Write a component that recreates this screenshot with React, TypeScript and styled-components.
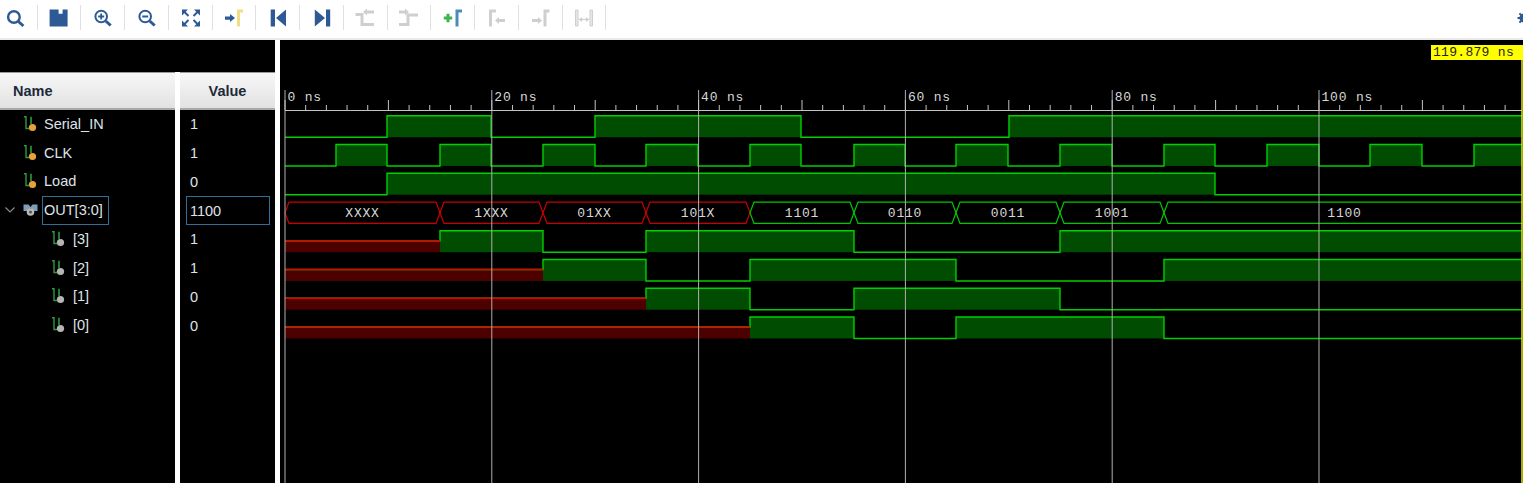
import React from "react";
import styled, { createGlobalStyle } from "styled-components";

const Global = createGlobalStyle`
  html, body { margin: 0; padding: 0; background: #000; overflow: hidden; }
`;

const Shell = styled.div`
  display: flex;
  flex-direction: column;
  width: 1523px;
  height: 483px;
  overflow: hidden;
  font-family: "Liberation Sans", Arial, sans-serif;
`;

const Toolbar = styled.div`
  flex: 0 0 40px;
  box-sizing: border-box;
  display: flex;
  align-items: flex-start;
  padding-top: 5px;
  background: #fff;
  border-bottom: 2.5px solid #e9e9e9;
`;

const ToolRow = styled.div`
  display: flex;
  margin-left: -6.25px;
`;

const ToolButton = styled.div`
  box-sizing: border-box;
  width: 43.75px;
  height: 25px;
  display: flex;
  align-items: center;
  justify-content: center;
  border-right: 1.5px solid #e0e0e0;
  svg { display: block; margin-top: 0.5px; margin-left: 1px; }
`;

const CornerGlyph = styled.div`
  margin-left: auto;
  width: 6px;
  height: 25px;
  overflow: hidden;
  display: flex;
  align-items: center;
  svg { flex: 0 0 auto; }
`;

const Main = styled.div`
  flex: 1;
  min-height: 0;
  display: flex;
  gap: 5px;
  background: #fff;
`;

const SidePanel = styled.div`
  flex: 0 0 275px;
  display: flex;
  flex-direction: column;
`;

const TopStrip = styled.div`
  flex: 0 0 32px;
  background: #000;
`;

const Columns = styled.div`
  flex: 1;
  display: flex;
  gap: 5px;
  min-height: 0;
`;

const Column = styled.div<{ $width: number }>`
  flex: 0 0 ${(p) => p.$width}px;
  background: #000;
  display: flex;
  flex-direction: column;
`;

const HeaderCell = styled.div<{ $centered?: boolean }>`
  box-sizing: border-box;
  flex: 0 0 38px;
  display: flex;
  align-items: center;
  justify-content: ${(p) => (p.$centered ? "center" : "flex-start")};
  padding-left: ${(p) => (p.$centered ? "0" : "13px")};
  background: linear-gradient(#f7f7f7, #e2e2e2);
  border-top: 1px solid #9a9a9a;
  border-bottom: 2px solid #a8a8a8;
  color: #1c2a3a;
  font-size: 14.5px;
  font-weight: 700;
`;

const NameRow = styled.div<{ $depth: number }>`
  box-sizing: border-box;
  height: 28.75px;
  display: flex;
  align-items: center;
  padding-left: ${(p) => (p.$depth ? 51 : 23)}px;
  position: relative;
  color: #dfe3e8;
  font-size: 14.5px;
`;

const Chevron = styled.svg`
  position: absolute;
  left: 4px;
  top: 10px;
`;

const SignalLabel = styled.span<{ $selected?: boolean; $depth: number }>`
  box-sizing: border-box;
  margin-left: ${(p) => (p.$depth ? 5 : 4)}px;
  height: 29px;
  line-height: 27px;
  padding: 0 ${(p) => (p.$selected ? 5 : 1)}px 0 1px;
  border: 1px solid ${(p) => (p.$selected ? "#2f7099" : "transparent")};
`;

const ValueRow = styled.div<{ $selected?: boolean }>`
  box-sizing: border-box;
  height: 28.75px;
  margin: 0 5px 0 6px;
  padding-left: 3px;
  display: flex;
  align-items: center;
  color: #dfe3e8;
  font-size: 14.5px;
  border: 1px solid ${(p) => (p.$selected ? "#2f7099" : "transparent")};
`;

const WavePanel = styled.div`
  flex: 1;
  min-width: 0;
  background: #000;
  position: relative;
  overflow: hidden;
`;

const WaveSvg = styled.svg`
  display: block;
  text {
    font-family: "Liberation Mono", "DejaVu Sans Mono", monospace;
    font-size: 13px;
    letter-spacing: 0.8px;
    fill: #d8d8d8;
  }
`;

const CursorTag = styled.div`
  position: absolute;
  right: 0;
  top: 5px;
  width: 92px;
  height: 15px;
  box-sizing: border-box;
  padding-left: 2px;
  background: #ffff00;
  color: #222;
  font-family: "Liberation Mono", "DejaVu Sans Mono", monospace;
  font-size: 13px;
  letter-spacing: 0.3px;
  line-height: 15px;
  white-space: nowrap;
  overflow: hidden;
`;

const BLUE = "#2d5a94";
const GREY = "#cfcfcf";

const I = ({ children }: { children: React.ReactNode }) => (
  <svg width="24" height="24" viewBox="0 0 24 24" fill="none">
    {children}
  </svg>
);

const tools: React.ReactNode[] = [
  <I>
    <circle cx="9.9" cy="11" r="5.8" stroke={BLUE} strokeWidth="2.4" />
    <path d="M14.4 15.5L19.4 20" stroke={BLUE} strokeWidth="3" />
  </I>,
  <I>
    <path d="M2.6 3.5H11.6V7.8H15.6V3.5H20.6V20.5H2.6Z" fill={BLUE} />
  </I>,
  <I>
    <circle cx="10.2" cy="10.5" r="5.8" stroke={BLUE} strokeWidth="2" />
    <path d="M7.2 10.5H13.2M10.2 7.5V13.5" stroke={BLUE} strokeWidth="1.8" />
    <path d="M14.7 15L19.7 19.5" stroke={BLUE} strokeWidth="3" />
  </I>,
  <I>
    <circle cx="10.2" cy="10.5" r="5.8" stroke={BLUE} strokeWidth="2" />
    <path d="M7.2 10.5H13.2" stroke={BLUE} strokeWidth="2" />
    <path d="M14.7 15L19.7 19.5" stroke={BLUE} strokeWidth="3" />
  </I>,
  <I>
    <path
      d="M3 3.5H9L3 9.5ZM21 3.5H15L21 9.5ZM3 20.5H9L3 14.5ZM21 20.5H15L21 14.5Z"
      fill={BLUE}
    />
    <path d="M5 5.5L9.5 10M19 5.5L14.5 10M5 18.5L9.5 14M19 18.5L14.5 14" stroke={BLUE} strokeWidth="2" />
  </I>,
  <I>
    <path d="M3 10.5H8V8L13 12L8 16V13.7H3Z" fill={BLUE} />
    <path d="M16.5 20.5V5H21" stroke="#f0dd85" strokeWidth="3" />
  </I>,
  <I>
    <path d="M4.7 3.5H9V20.5H4.7ZM20 3.5V20.5L10 12Z" fill={BLUE} />
  </I>,
  <I>
    <path d="M4.8 3.5L15 12L4.8 20.5ZM16 3.5H20.2V20.5H16Z" fill={BLUE} />
  </I>,
  <I>
    <path d="M1.5 8.5H8V18.5H20" stroke={GREY} strokeWidth="3" />
    <path d="M9 6L13 2.5V4.5H20V7.5H13V9.5Z" fill={GREY} />
  </I>,
  <I>
    <path d="M2 18.5H11V9H21" stroke={GREY} strokeWidth="3" />
    <path d="M2 4.5H8V2.5L12 6L8 9.5V7.5H2Z" fill={GREY} />
  </I>,
  <I>
    <path d="M2.8 12H11.2M7 7.8V16.2" stroke="#3fb350" strokeWidth="3" />
    <path d="M16 20.5V5H21" stroke="#4a8bb8" strokeWidth="3" />
  </I>,
  <I>
    <path d="M5.5 20.5V5H11" stroke={GREY} strokeWidth="3" />
    <path d="M10 14.5L14 11V13H20V16H14V18Z" fill={GREY} />
  </I>,
  <I>
    <path d="M3 13H9V11L13 14.5L9 18V16H3Z" fill={GREY} />
    <path d="M16 20.5V5H20.5" stroke={GREY} strokeWidth="3" />
  </I>,
  <I>
    <path d="M3.5 4V20H6V4ZM18 4V20H20.5V4Z" stroke={GREY} strokeWidth="1" fill="#e6e6e6" />
    <path d="M7 13.5H17" stroke={GREY} strokeWidth="1.3" />
    <path d="M7 13.5L10 11V16ZM17 13.5L14 11V16Z" fill={GREY} />
  </I>,
];

const SignalIcon = ({ dot }: { dot: string }) => (
  <svg width="15" height="17" viewBox="0 0 15 17" fill="none" style={{ flex: "0 0 auto" }}>
    <path d="M1 0.8H3V12.5H6" stroke="#2f9a3e" strokeWidth="1.4" />
    <path d="M8 0.8V8" stroke="#2f9a3e" strokeWidth="1.6" />
    <circle cx="9.5" cy="11.5" r="3.6" fill={dot} />
  </svg>
);

const BusIcon = () => (
  <svg width="15" height="17" viewBox="0 0 15 17" fill="none" style={{ flex: "0 0 auto" }}>
    <path d="M0.5 2.5H5.5L7.5 5L9.5 2.5H14.5V9H11L7.5 6L4 9H0.5Z" fill="#7f9db5" />
    <circle cx="7.5" cy="10" r="3.8" fill="#b9b9b9" />
    <circle cx="7.5" cy="10" r="1.5" fill="#555" />
  </svg>
);

type Signal = { name: string; value: string; depth: number; kind: "scalar" | "bus"; dot?: string };

const signals: Signal[] = [
  { name: "Serial_IN", value: "1", depth: 0, kind: "scalar", dot: "#e8a13c" },
  { name: "CLK", value: "1", depth: 0, kind: "scalar", dot: "#e8a13c" },
  { name: "Load", value: "0", depth: 0, kind: "scalar", dot: "#e8a13c" },
  { name: "OUT[3:0]", value: "1100", depth: 0, kind: "bus" },
  { name: "[3]", value: "1", depth: 1, kind: "scalar", dot: "#b5b5b5" },
  { name: "[2]", value: "1", depth: 1, kind: "scalar", dot: "#b5b5b5" },
  { name: "[1]", value: "0", depth: 1, kind: "scalar", dot: "#b5b5b5" },
  { name: "[0]", value: "0", depth: 1, kind: "scalar", dot: "#b5b5b5" },
];

const END = 1522;
const ROW0 = 115.8;
const PITCH = 28.75;
const HEIGHT = 21.4;
const LINE = "#00cf00";
const FILL = "#004c00";

type Seg = [number, "0" | "1" | "x"];

// each entry: x at which the level starts
const clk: Seg[] = (() => {
  const xs = [285, 336, 387, 440, 491, 543, 595, 646, 698, 750, 801, 854, 905, 956, 1008, 1060, 1112, 1164, 1215, 1267, 1319, 1370, 1422, 1474];
  return xs.map((x, i) => [x, i % 2 ? "1" : "0"] as Seg);
})();

const waves: (Seg[] | null)[] = [
  [[285, "0"], [387, "1"], [491, "0"], [595, "1"], [801, "0"], [1009, "1"]],
  clk,
  [[285, "0"], [387, "1"], [1215, "0"]],
  null,
  [[285, "x"], [440, "1"], [543, "0"], [646, "1"], [854, "0"], [1060, "1"]],
  [[285, "x"], [543, "1"], [646, "0"], [750, "1"], [956, "0"], [1164, "1"]],
  [[285, "x"], [646, "1"], [750, "0"], [854, "1"], [1060, "0"]],
  [[285, "x"], [750, "1"], [854, "0"], [956, "1"], [1164, "0"]],
];

const busSegs: [number, number, string, boolean][] = [
  [285, 440, "XXXX", true],
  [440, 543, "1XXX", true],
  [543, 646, "01XX", true],
  [646, 750, "101X", true],
  [750, 854, "1101", false],
  [854, 956, "0110", false],
  [956, 1060, "0011", false],
  [1060, 1164, "1001", false],
  [1164, 1560, "1100", false],
];

const rulerTicks = Array.from({ length: 60 }, (_, i) => i * 2)
  .map((ns) => ({ ns, x: 285 + ns * 10.34 }))
  .filter((t) => t.x < END);
const labelled = [0, 20, 40, 60, 80, 100].map((ns) => ({ ns, x: 285 + ns * 10.34 }));

const ScalarWave = ({ segs, row }: { segs: Seg[]; row: number }) => {
  const hi = ROW0 + PITCH * row;
  const lo = hi + HEIGHT;
  const xTop = hi + 10;
  const parts = segs.map(([x, v], i) => ({ x, v, to: i + 1 < segs.length ? segs[i + 1][0] : END }));
  const lvl = (v: string) => (v === "1" ? hi : v === "0" ? lo : xTop);
  const d = parts
    .map((p, i) => `${i === 0 ? "M" : "L"}${p.x} ${lvl(p.v)} L${p.to} ${lvl(p.v)}`)
    .join(" ");
  return (
    <g>
      {parts.map((p) =>
        p.v === "1" ? (
          <rect key={p.x} x={p.x} y={hi} width={p.to - p.x} height={HEIGHT} fill={FILL} />
        ) : p.v === "x" ? (
          <rect key={p.x} x={p.x} y={xTop} width={p.to - p.x} height={lo - xTop} fill="#4d0000" />
        ) : null
      )}
      <path d={d} stroke={LINE} strokeWidth="1.4" fill="none" />
      {parts
        .filter((p) => p.v === "x")
        .map((p) => (
          <path key={p.x} d={`M${p.x} ${xTop}H${p.to}`} stroke="#e00000" strokeWidth="1.5" />
        ))}
    </g>
  );
};

const BusWave = ({ row }: { row: number }) => {
  const top = ROW0 + PITCH * row;
  const bot = top + HEIGHT;
  const mid = (top + bot) / 2;
  return (
    <g>
      {busSegs.map(([a, b, , bad]) => (
        <path
          key={a}
          d={`M${a} ${mid}L${a + 4} ${top}H${b - 4}L${b} ${mid}L${b - 4} ${bot}H${a + 4}Z`}
          stroke={bad ? "#c80000" : "#00c800"}
          strokeWidth="1.2"
          fill="none"
        />
      ))}
    </g>
  );
};

export default function App() {
  return (
    <Shell>
      <Global />
      <Toolbar>
        <ToolRow>
          {tools.map((t, i) => (
            <ToolButton key={i}>{t}</ToolButton>
          ))}
        </ToolRow>
        <CornerGlyph>
          <svg width="14" height="14" viewBox="0 0 14 14">
            <circle cx="7" cy="7" r="4.6" fill={BLUE} />
            <path d="M7 0.5V13.5M0.5 7H13.5M2.4 2.4L11.6 11.6M11.6 2.4L2.4 11.6" stroke={BLUE} strokeWidth="2" />
          </svg>
        </CornerGlyph>
      </Toolbar>
      <Main>
        <SidePanel>
          <TopStrip />
          <Columns>
            <Column $width={175}>
              <HeaderCell>Name</HeaderCell>
              {signals.map((s) => (
                <NameRow key={s.name} $depth={s.depth}>
                  {s.kind === "bus" && (
                    <Chevron width="12" height="8" viewBox="0 0 12 8" fill="none">
                      <path d="M1.5 1.5L6 6L10.5 1.5" stroke="#8a8a8a" strokeWidth="1.2" />
                    </Chevron>
                  )}
                  {s.kind === "bus" ? <BusIcon /> : <SignalIcon dot={s.dot as string} />}
                  <SignalLabel $depth={s.depth} $selected={s.kind === "bus"}>
                    {s.name}
                  </SignalLabel>
                </NameRow>
              ))}
            </Column>
            <Column $width={95}>
              <HeaderCell $centered>Value</HeaderCell>
              {signals.map((s) => (
                <ValueRow key={s.name} $selected={s.kind === "bus"}>
                  {s.value}
                </ValueRow>
              ))}
            </Column>
          </Columns>
        </SidePanel>
        <WavePanel>
          <WaveSvg width="1243" height="443" viewBox="280 40 1243 443">
            {waves.map((w, i) => (w ? <ScalarWave key={i} segs={w} row={i} /> : <BusWave key={i} row={i} />))}
            {labelled.map((t) => (
              <path key={t.ns} d={`M${t.x} 90V483`} stroke="#b0b0b0" strokeWidth="1" />
            ))}
            <path d={`M285 110.5H${END}`} stroke="#c4c4c4" strokeWidth="1" />
            {rulerTicks.map((t) => (
              <path
                key={t.ns}
                d={`M${t.x} ${t.ns % 10 === 0 ? 100 : 105}V110`}
                stroke="#c4c4c4"
                strokeWidth="1"
              />
            ))}
            {labelled.map((t) => (
              <text key={t.ns} x={t.x + 2.5} y={101}>
                {t.ns} ns
              </text>
            ))}
            {busSegs.map(([a, b, label]) => (
              <text key={a} x={label === "1100" ? 1344.5 : (a + b) / 2} y={217} textAnchor="middle">
                {label}
              </text>
            ))}
            <path d="M1522 60V483" stroke="#e6e600" strokeWidth="1.5" />
          </WaveSvg>
          <CursorTag>119.879 ns</CursorTag>
        </WavePanel>
      </Main>
    </Shell>
  );
}
